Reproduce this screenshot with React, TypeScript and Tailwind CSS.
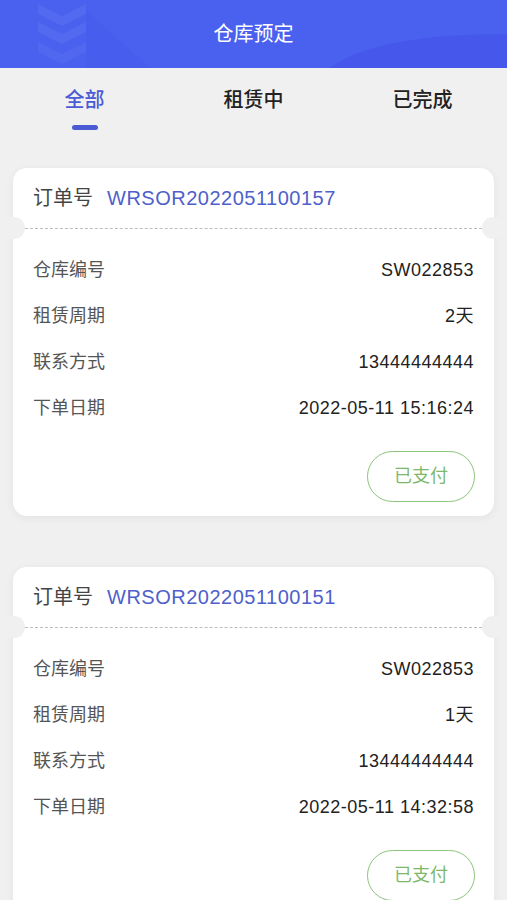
import React, { useState } from 'react'

interface Order {
  no: string
  warehouse: string
  period: string
  phone: string
  date: string
}

const ORDERS: Order[] = [
  {
    no: 'WRSOR2022051100157',
    warehouse: 'SW022853',
    period: '2天',
    phone: '13444444444',
    date: '2022-05-11 15:16:24',
  },
  {
    no: 'WRSOR2022051100151',
    warehouse: 'SW022853',
    period: '1天',
    phone: '13444444444',
    date: '2022-05-11 14:32:58',
  },
]

const TABS = ['全部', '租赁中', '已完成']

const FONT = { fontFamily: '"Liberation Sans", "Noto Sans CJK SC", sans-serif' }

function HeaderDecor() {
  return (
    <svg
      className="absolute inset-0 w-full h-full pointer-events-none"
      viewBox="0 0 507 68"
      preserveAspectRatio="none"
    >
      {/* chevrons on the left */}
      <path d="M38 4 L62 16 L86 4 L86 14 L62 26 L38 14 Z" fill="#ffffff" opacity="0.05" />
      <path d="M38 22 L62 34 L86 22 L86 32 L62 44 L38 32 Z" fill="#ffffff" opacity="0.05" />
      <path d="M38 42 L62 54 L86 42 L86 52 L62 64 L38 52 Z" fill="#ffffff" opacity="0.04" />
      <path d="M86 10 L86 68 L150 68 Z" fill="#3d52e6" opacity="0.2" />
      {/* curve bottom right */}
      <path d="M330 68 C360 45 420 34 507 34 L507 68 Z" fill="#4450ea" opacity="0.6" />
    </svg>
  )
}

function Row({ label, value }: { label: string; value: string }) {
  return (
    <div className="h-[46px] flex items-center justify-between px-[20px] text-[18px]">
      <span className="text-[#555]">{label}</span>
      <span className="text-[#222] tracking-[0.5px]">{value}</span>
    </div>
  )
}

function OrderCard({ order }: { order: Order }) {
  return (
    <div className="relative mx-[13px] bg-white rounded-[14px] shadow-[0_2px_10px_rgba(0,0,0,0.06)]">
      {/* Order number */}
      <div className="h-[60px] flex items-center px-[20px] text-[20px]">
        <span className="text-[#444]">订单号</span>
        <span className="ml-[14px] text-[#4f5fcb] tracking-[0.5px]">{order.no}</span>
      </div>

      {/* Dashed divider with notches */}
      <div className="relative h-0">
        <div className="mx-[12px] border-t border-dashed border-[#bdbdbd]" />
        <div className="absolute -left-[12px] -top-[11px] w-[24px] h-[22px] rounded-full bg-[#f0f0f0]" />
        <div className="absolute -right-[12px] -top-[11px] w-[24px] h-[22px] rounded-full bg-[#f0f0f0]" />
      </div>

      {/* Details */}
      <div className="pt-[19px]">
        <Row label="仓库编号" value={order.warehouse} />
        <Row label="租赁周期" value={order.period} />
        <Row label="联系方式" value={order.phone} />
        <Row label="下单日期" value={order.date} />
      </div>

      <div className="flex justify-end pt-[20px] pb-[14px] pr-[19px]">
        <button className="w-[108px] h-[51px] rounded-full border border-[#8cc47c] text-[18px] text-[#7db86b]">
          已支付
        </button>
      </div>
    </div>
  )
}

export default function App() {
  const [active, setActive] = useState(0)

  return (
    <div className="min-h-[900px] bg-[#f0f0f0]" style={FONT}>
      {/* Header */}
      <div className="relative h-[68px] bg-[#4a61ef] flex items-center justify-center overflow-hidden">
        <HeaderDecor />
        <span className="relative text-white text-[20px]">仓库预定</span>
      </div>

      {/* Tabs */}
      <div className="grid grid-cols-3 pt-[18px] h-[100px]">
        {TABS.map((t, i) => (
          <button
            key={t}
            onClick={() => setActive(i)}
            className="flex flex-col items-center"
          >
            <span
              className={`text-[20px] leading-[28px] font-medium ${
                active === i ? 'text-[#4b5bd6]' : 'text-[#222]'
              }`}
            >
              {t}
            </span>
            {active === i && (
              <span className="mt-[11px] w-[26px] h-[5px] rounded-full bg-[#4b5bd6]" />
            )}
          </button>
        ))}
      </div>

      {/* Orders */}
      <div className="flex flex-col gap-[51px] pb-[40px]">
        {ORDERS.map((o) => (
          <OrderCard key={o.no} order={o} />
        ))}
      </div>
    </div>
  )
}
